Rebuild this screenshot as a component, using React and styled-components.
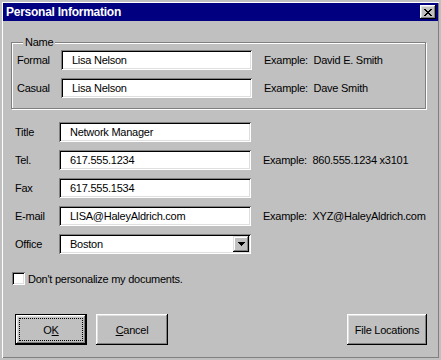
import React from 'react';
import styled, { createGlobalStyle } from 'styled-components';

const GlobalStyle = createGlobalStyle`
    html, body {
        margin: 0;
        padding: 0;
        background: #c0c0c0;
    }
    body {
        font-family: 'Liberation Sans', Arial, sans-serif;
        font-size: 11px;
        letter-spacing: -0.25px;
        color: #000000;
    }
`;

const Window = styled.div`
    width: 441px;
    height: 360px;
    box-sizing: border-box;
    padding: 3px;
    background: #c0c0c0;
    display: flex;
    flex-direction: column;
    box-shadow:
        inset 2px 2px #c0c0c0,
        inset -2px -2px #c0c0c0,
        inset 3px 3px #ffffff,
        inset -3px -3px #808080;
`;

const TitleBar = styled.div`
    height: 18px;
    background: #000080;
    display: flex;
    align-items: center;
    justify-content: space-between;
    padding: 0 2px 0 3px;
`;

const TitleText = styled.span`
    color: #ffffff;
    font-weight: bold;
    font-size: 12px;
`;

const CloseButton = styled.div`
    width: 16px;
    height: 14px;
    box-sizing: border-box;
    background: #c0c0c0;
    display: flex;
    align-items: center;
    justify-content: center;
    box-shadow:
        inset -1px -1px #000000,
        inset 1px 1px #ffffff,
        inset -2px -2px #808080,
        inset 2px 2px #dfdfdf;
`;

const Content = styled.div`
    flex: 1;
    display: flex;
    flex-direction: column;
    padding: 21px 11px 0 8px;
`;

const Group = styled.div`
    position: relative;
    margin-right: 1px;
    border: 1px solid #808080;
    box-shadow: inset 1px 1px #ffffff, 1px 1px #ffffff;
    padding: 7px 0 10px 5px;
    display: flex;
    flex-direction: column;
    gap: 8px;
`;

const Legend = styled.span`
    position: absolute;
    top: -7px;
    left: 11px;
    padding: 0 2px;
    line-height: 13px;
    background: #c0c0c0;
`;

const Fields = styled.div`
    display: flex;
    flex-direction: column;
    gap: 8px;
    margin-top: 13px;
    padding-left: 4px;
`;

const Row = styled.div`
    display: flex;
    align-items: center;
    height: 20px;
`;

const Label = styled.span`
    width: 44px;
    flex-shrink: 0;
`;

const Field = styled.div`
    width: ${p => p.$width}px;
    height: 20px;
    flex-shrink: 0;
    box-sizing: border-box;
    background: #ffffff;
    display: flex;
    align-items: center;
    padding: 0 2px 0 11px;
    box-shadow:
        inset 1px 1px #808080,
        inset -1px -1px #ffffff,
        inset 2px 2px #000000,
        inset -2px -2px #dfdfdf;
`;

const FieldText = styled.span`
    flex: 1;
    white-space: nowrap;
`;

const DropButton = styled.div`
    width: 16px;
    height: 16px;
    box-sizing: border-box;
    background: #c0c0c0;
    display: flex;
    align-items: center;
    justify-content: center;
    box-shadow:
        inset -1px -1px #000000,
        inset 1px 1px #dfdfdf,
        inset -2px -2px #808080,
        inset 2px 2px #ffffff;
`;

const Example = styled.span`
    margin-left: 12px;
    white-space: pre;
`;

const CheckRow = styled.label`
    display: flex;
    align-items: center;
    gap: 3px;
    margin-top: 18px;
    padding-left: 1px;
`;

const CheckBox = styled.span`
    width: 13px;
    height: 13px;
    box-sizing: border-box;
    background: #ffffff;
    box-shadow:
        inset 1px 1px #808080,
        inset -1px -1px #ffffff,
        inset 2px 2px #000000,
        inset -2px -2px #dfdfdf;
`;

const ButtonBar = styled.div`
    display: flex;
    align-items: center;
    gap: 9px;
    margin-top: 29px;
    padding-left: 4px;
`;

const Button = styled.div`
    width: ${p => p.$width}px;
    height: 31px;
    box-sizing: border-box;
    background: #c0c0c0;
    display: flex;
    padding: 3px;
    margin-left: ${p => (p.$push ? 'auto' : '0')};
    border: ${p => (p.$default ? '1px solid #000000' : 'none')};
    box-shadow:
        inset -1px -1px #000000,
        inset 1px 1px #ffffff,
        inset -2px -2px #808080,
        inset 2px 2px #dfdfdf;
`;

const Caption = styled.span`
    flex: 1;
    display: flex;
    align-items: center;
    justify-content: center;
    border: 1px ${p => (p.$focused ? 'dotted #000000' : 'solid transparent')};
`;

const CloseGlyph = () => (
    <svg width="8" height="7" viewBox="0 0 8 7" shapeRendering="crispEdges">
        <path
            fill="#000"
            d="M0 0h2v1H0zM6 0h2v1H6zM1 1h2v1H1zM5 1h2v1H5zM2 2h4v1H2zM3 3h2v1H3zM2 4h4v1H2zM1 5h2v1H1zM5 5h2v1H5zM0 6h2v1H0zM6 6h2v1H6z"
        />
    </svg>
);

const ArrowGlyph = () => (
    <svg width="7" height="4" viewBox="0 0 7 4" shapeRendering="crispEdges">
        <path fill="#000" d="M0 0h7v1H0zM1 1h5v1H1zM2 2h3v1H2zM3 3h1v1H3z" />
    </svg>
);

function App() {
    return (
        <>
            <GlobalStyle />
            <Window>
                <TitleBar>
                    <TitleText>Personal Information</TitleText>
                    <CloseButton><CloseGlyph /></CloseButton>
                </TitleBar>
                <Content>
                    <Group>
                        <Legend>Name</Legend>
                        <Row>
                            <Label>Formal</Label>
                            <Field $width={191}><FieldText>Lisa Nelson</FieldText></Field>
                            <Example>Example:  David E. Smith</Example>
                        </Row>
                        <Row>
                            <Label>Casual</Label>
                            <Field $width={191}><FieldText>Lisa Nelson</FieldText></Field>
                            <Example>Example:  Dave Smith</Example>
                        </Row>
                    </Group>

                    <Fields>
                        <Row>
                            <Label>Title</Label>
                            <Field $width={192}><FieldText>Network Manager</FieldText></Field>
                        </Row>
                        <Row>
                            <Label>Tel.</Label>
                            <Field $width={192}><FieldText>617.555.1234</FieldText></Field>
                            <Example>Example:  860.555.1234 x3101</Example>
                        </Row>
                        <Row>
                            <Label>Fax</Label>
                            <Field $width={192}><FieldText>617.555.1534</FieldText></Field>
                        </Row>
                        <Row>
                            <Label>E-mail</Label>
                            <Field $width={192}><FieldText>LISA@HaleyAldrich.com</FieldText></Field>
                            <Example>Example:  XYZ@HaleyAldrich.com</Example>
                        </Row>
                        <Row>
                            <Label>Office</Label>
                            <Field $width={192}>
                                <FieldText>Boston</FieldText>
                                <DropButton><ArrowGlyph /></DropButton>
                            </Field>
                        </Row>
                    </Fields>

                    <CheckRow>
                        <CheckBox />
                        <span>Don't personalize my documents.</span>
                    </CheckRow>

                    <ButtonBar>
                        <Button $width={72} $default>
                            <Caption $focused>O<u>K</u></Caption>
                        </Button>
                        <Button $width={72}>
                            <Caption><u>C</u>ancel</Caption>
                        </Button>
                        <Button $width={80} $push>
                            <Caption>File Locations</Caption>
                        </Button>
                    </ButtonBar>
                </Content>
            </Window>
        </>
    );
}

export default App;
